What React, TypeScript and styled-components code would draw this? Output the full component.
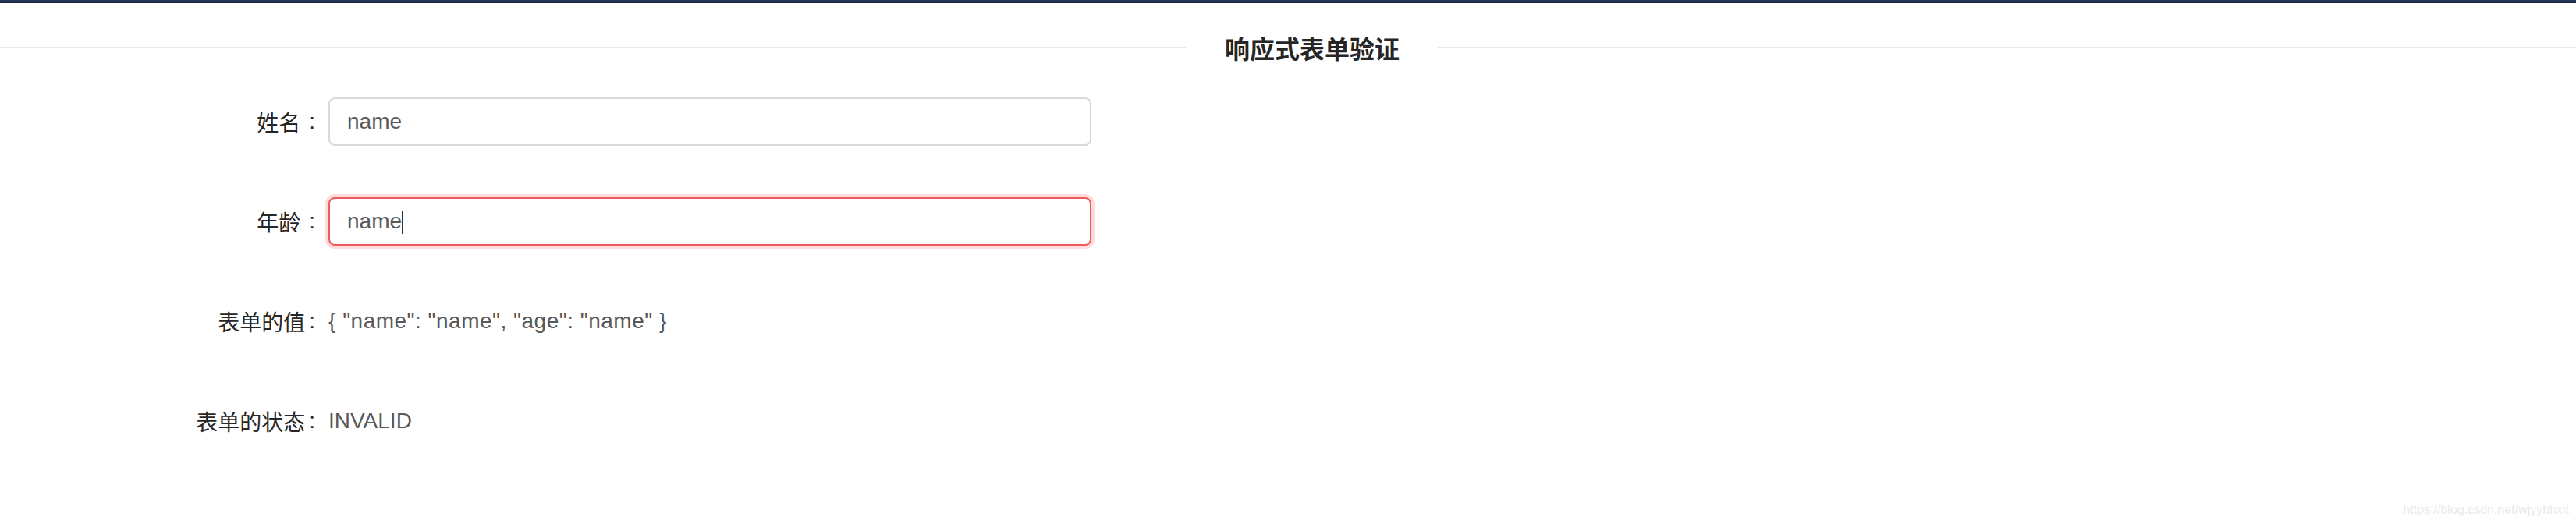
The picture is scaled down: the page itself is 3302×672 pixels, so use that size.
import React from 'react';
import styled, { createGlobalStyle } from 'styled-components';

const GlobalStyle = createGlobalStyle`
  html, body {
    margin: 0;
    padding: 0;
    background: #fff;
  }
  body {
    font-family: 'Liberation Sans', 'Noto Sans CJK SC', sans-serif;
  }
`;

const fields = [
  { label: '姓名', value: 'name', invalid: false, wide: true },
  { label: '年龄', value: 'name', invalid: true, wide: true },
];

const App = () => {
  const formValue = { name: 'name', age: 'name' };

  return (
    <Page>
      <GlobalStyle />
      <TopBar />
      <Divider>
        <DividerText>响应式表单验证</DividerText>
      </Divider>

      <Form>
        {fields.map((field) => (
          <Row key={field.label}>
            <Label>
              {field.label}
              <Colon wide={field.wide}>:</Colon>
            </Label>
            <InputWrapper>
              <Input readOnly value={field.value} invalid={field.invalid} />
              {field.invalid && <Caret />}
            </InputWrapper>
          </Row>
        ))}

        <Row>
          <Label>
            表单的值
            <Colon>:</Colon>
          </Label>
          <Value spaced>{`{ "name": "${formValue.name}", "age": "${formValue.age}" }`}</Value>
        </Row>

        <Row>
          <Label>
            表单的状态
            <Colon>:</Colon>
          </Label>
          <Value>INVALID</Value>
        </Row>
      </Form>

      <Watermark>https://blog.csdn.net/wjyyhhxit</Watermark>
    </Page>
  );
};

const Page = styled.div`
  position: relative;
  min-height: 100vh;
  overflow: hidden;
`;

const TopBar = styled.div`
  height: 3px;
  background-color: #243558;
  border-bottom: 1px solid #16203a;
`;

const Divider = styled.div`
  display: flex;
  align-items: center;
  height: 46px;
  margin-top: 34px;

  &::before,
  &::after {
    content: '';
    height: 2px;
    background-color: #e8e8e8;
  }

  &::before {
    flex: 0 0 1520px;
  }

  &::after {
    flex: 1 1 0;
  }
`;

const DividerText = styled.span`
  padding: 0 49px 0 50px;
  font-family: 'Noto Sans CJK SC', sans-serif;
  font-size: 32px;
  font-weight: 700;
  line-height: 46px;
  color: #262626;
  white-space: nowrap;
`;

const Form = styled.div`
  display: flex;
  flex-direction: column;
  gap: 66px;
  margin-top: 41px;
`;

const Row = styled.div`
  display: grid;
  grid-template-columns: 421px 978px;
  align-items: center;
  height: 62px;
`;

const Label = styled.label`
  display: flex;
  justify-content: flex-end;
  align-items: center;
  font-family: 'Noto Sans CJK SC', sans-serif;
  font-size: 28px;
  color: #262626;
  white-space: nowrap;
`;

const Colon = styled.span<{ wide?: boolean }>`
  margin: ${({ wide }) => (wide ? '0 17px 0 11px' : '0 17px 0 5px')};
  font-family: 'Liberation Sans', sans-serif;
`;

const InputWrapper = styled.div`
  position: relative;
  height: 62px;
`;

const Input = styled.input<{ invalid?: boolean }>`
  box-sizing: border-box;
  width: 100%;
  height: 62px;
  padding: 0 22px;
  border: 2px solid ${({ invalid }) => (invalid ? '#ee5a5c' : '#d9d9d9')};
  border-radius: 8px;
  box-shadow: ${({ invalid }) => (invalid ? '0 0 0 4px rgba(255, 77, 79, 0.2)' : 'none')};
  outline: none;
  font-family: 'Liberation Sans', sans-serif;
  font-size: 28px;
  color: #595959;
  background: #fff;
`;

const Caret = styled.span`
  position: absolute;
  left: 94px;
  top: 17px;
  width: 2px;
  height: 30px;
  background-color: #333;
`;

const Value = styled.div<{ spaced?: boolean }>`
  font-family: 'Liberation Sans', sans-serif;
  font-size: 28px;
  letter-spacing: ${({ spaced }) => (spaced ? '0.5px' : 'normal')};
  color: #595959;
  white-space: nowrap;
`;

const Watermark = styled.div`
  position: absolute;
  right: 9px;
  bottom: 9px;
  font-family: 'Liberation Sans', sans-serif;
  font-size: 16px;
  color: #e9e9e9;
`;

export default App;
